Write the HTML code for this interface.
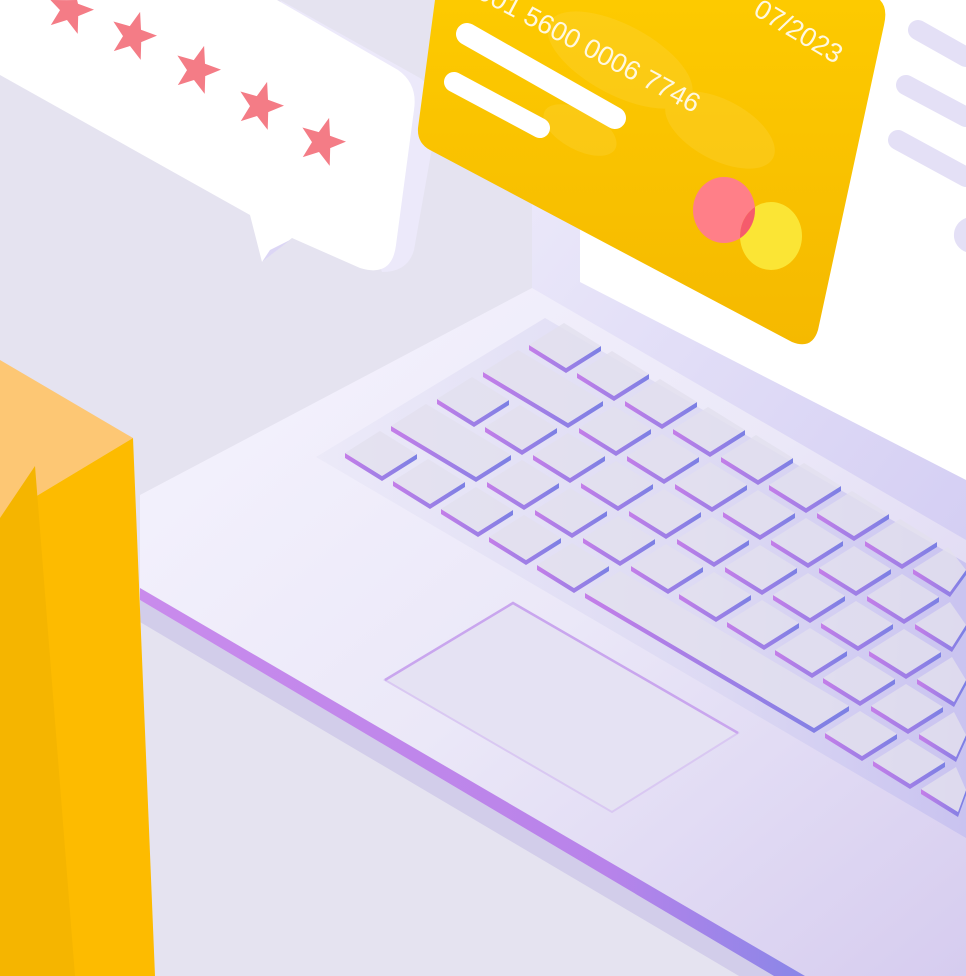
<!DOCTYPE html>
<html><head><meta charset="utf-8"><style>
html,body{margin:0;padding:0;background:#e5e3f0;width:966px;height:976px;overflow:hidden}
svg{display:block;overflow:hidden}
text{font-family:"Liberation Sans",sans-serif}
</style></head><body>
<svg id="s" width="966" height="976" viewBox="0 0 966 976" xmlns="http://www.w3.org/2000/svg">
<defs>
<linearGradient id="base" x1="0" y1="0" x2="1" y2="1">
<stop offset="0" stop-color="#f6f4fe"/><stop offset="0.5" stop-color="#ebe8f8"/><stop offset="1" stop-color="#d6ccef"/></linearGradient>
<linearGradient id="rec" x1="0" y1="0.5" x2="1" y2="0.5">
<stop offset="0" stop-color="#ebe9f8"/><stop offset="0.6" stop-color="#dcd9f3"/><stop offset="1" stop-color="#c7c1f0"/></linearGradient>
<linearGradient id="kd" x1="0" y1="0" x2="1" y2="0">
<stop offset="0" stop-color="#c47ee8"/><stop offset="1" stop-color="#7b80e4"/></linearGradient>
<linearGradient id="edge" x1="0" y1="0" x2="1" y2="0">
<stop offset="0" stop-color="#c98bec"/><stop offset="0.7" stop-color="#b883ea"/><stop offset="1" stop-color="#8a86e8"/></linearGradient>
<linearGradient id="card" x1="0" y1="0" x2="0" y2="1">
<stop offset="0" stop-color="#fdca00"/><stop offset="1" stop-color="#f5b900"/></linearGradient>
<linearGradient id="scr" x1="0" y1="0" x2="1" y2="1">
<stop offset="0" stop-color="#efedfb"/><stop offset="1" stop-color="#d4cef3"/></linearGradient>
</defs>

<polygon points="532,0 966,0 966,548 532,290" fill="url(#scr)"/>
<polygon points="580,0 966,0 966,480 580,282" fill="#ffffff"/>
<g stroke="#e4e0f6" stroke-width="20" stroke-linecap="round">
<line x1="918" y1="30" x2="966" y2="57"/>
<line x1="906" y1="85" x2="966" y2="117"/>
<line x1="898" y1="140" x2="966" y2="177"/>
</g>
<path d="M966,218 A18,18 0 0 0 966,252 Z" fill="#e4e0f6"/>

<polygon points="140,495 532,288 966,540 966,976 805,976 140,588" fill="url(#base)"/>
<polygon points="140,600 774,976 739,976 140,622" fill="#d2cdea"/>
<polygon points="140,588 805,976 774,976 140,600" fill="url(#edge)"/>

<polygon points="316,457 545,318 966,563 966,838" fill="url(#rec)" opacity="0.9"/>
<g id="keys"></g>

<polygon points="513,603 738,733 612,812 385,680" fill="#e5e2f3" stroke="#d9c8f2" stroke-width="2"/>
<polyline points="385,680 513,603 738,733" fill="none" stroke="#c9a6ee" stroke-width="2.5"/>

<polygon points="0,360 133,438 0,518" fill="#fdc774"/>
<polygon points="0,518 133,438 155,976 0,976" fill="#fdbb00"/>
<polygon points="0,518 35,466 75,976 0,976" fill="#f5b500"/>

<path d="M280,0 L420,78 Q440,92 436,125 L414,250 Q408,272 382,272 Z" fill="#ece9fa"/>
<path d="M0,0 L277,0 L398,70 Q418,84 414,110 L396,245 Q392,278 360,268 L292,238 L262,262 L250,215 L0,75 Z" fill="#ffffff"/>
<path d="M262,262 L290,240 L270,250 Z" fill="#dcd6f5"/>
<g fill="#f47c86" id="stars"></g>

<path d="M435,0 L880,0 Q888,8 884,25 L818,330 Q812,350 792,342 L430,150 Q417,143 418,128 Z" fill="url(#card)"/>
<g fill="#fdd53a" opacity="0.35">
<ellipse cx="620" cy="60" rx="80" ry="35" transform="rotate(28 620 60)"/>
<ellipse cx="720" cy="130" rx="60" ry="30" transform="rotate(28 720 130)"/>
<ellipse cx="580" cy="130" rx="40" ry="20" transform="rotate(28 580 130)"/>
</g>
<g stroke="#ffffff" stroke-linecap="round">
<line x1="467" y1="34" x2="615" y2="118" stroke-width="22"/>
<line x1="454" y1="82" x2="540" y2="128" stroke-width="20"/>
</g>
<text x="0" y="0" font-size="27" fill="#fff8e0" transform="translate(462,-10) rotate(28)">0001 5600 0006 7746</text>
<text x="0" y="0" font-size="27" fill="#fff8e0" transform="translate(752,14) rotate(31)">07/2023</text>
<ellipse cx="724" cy="210" rx="31" ry="33" fill="#ff7f88"/>
<ellipse cx="771" cy="236" rx="31" ry="34" fill="#fbe535"/>
<clipPath id="cc"><ellipse cx="724" cy="210" rx="31" ry="33"/></clipPath>
<ellipse cx="771" cy="236" rx="31" ry="34" fill="#f55b6c" clip-path="url(#cc)"/>
</svg>
<script>
(function(){
var NS="http://www.w3.org/2000/svg";
var g=document.getElementById('keys');
var O=[485,427],u=[48,28],v=[46,-27];
function key(a,b,j){
 var L=[O[0]+a*u[0]+j*v[0],O[1]+a*u[1]+j*v[1]];
 if(L[0]>960) return;
 var U=[(b-a)*u[0]+37,(b-a)*u[1]+23],V=[35,-22];
 var T=[L[0]+V[0],L[1]+V[1]],R=[L[0]+V[0]+U[0],L[1]+V[1]+U[1]],B=[L[0]+U[0],L[1]+U[1]];
 function c(p){return [Math.min(p[0],966),Math.min(p[1],976)];}
 var d=5;
 var p1=document.createElementNS(NS,'polygon');
 p1.setAttribute('points',[L,B,R,[R[0],R[1]+d],[B[0],B[1]+d],[L[0],L[1]+d]].map(c).map(function(p){return p.join(',')}).join(' '));
 p1.setAttribute('fill','url(#kd)');g.appendChild(p1);
 var p2=document.createElementNS(NS,'polygon');
 p2.setAttribute('points',[L,T,R,B].map(c).map(function(p){return p.join(',')}).join(' '));
 p2.setAttribute('fill','#e2e0ee');p2.setAttribute('fill-opacity','0.8');g.appendChild(p2);
}
var rows=[[2,[[-1,-1],[0,0],[1,1],[2,2],[3,3],[4,4],[5,5],[6,6],[7,7],[8,8],[9,9],[10,10],[11,11]]],
[1,[[-1,0],[1,1],[2,2],[3,3],[4,4],[5,5],[6,6],[7,7],[8,8],[9,9],[10,10],[11,11],[12,12]]],
[0,[[-1,-1],[0,0],[1,1],[2,2],[3,3],[4,4],[5,5],[6,6],[7,7],[8,8],[9,9],[10,10],[11,11],[12,12]]],
[-1,[[-1,0],[1,1],[2,2],[3,3],[4,4],[5,5],[6,6],[7,7],[8,8],[9,9],[10,10],[11,11],[12,12]]],
[-2,[[-1,-1],[0,0],[1,1],[2,2],[3,3],[4,8],[9,9],[10,10],[11,11],[12,12]]]];
rows.forEach(function(r){r[1].forEach(function(k){key(k[0],k[1],r[0]);});});
var st=document.getElementById('stars');
[[70,10],[133,36],[197,70],[260,106],[322,142]].forEach(function(c){
 var pts=[];for(var i=0;i<10;i++){var a=-Math.PI/2+i*Math.PI/5+0.3;var r=i%2?10:24;pts.push((c[0]+r*Math.cos(a)).toFixed(1)+','+Math.max(0,(c[1]+r*Math.sin(a)*1.05)).toFixed(1));}
 var p=document.createElementNS(NS,'polygon');p.setAttribute('points',pts.join(' '));st.appendChild(p);
});
})();
</script>
</body></html>
